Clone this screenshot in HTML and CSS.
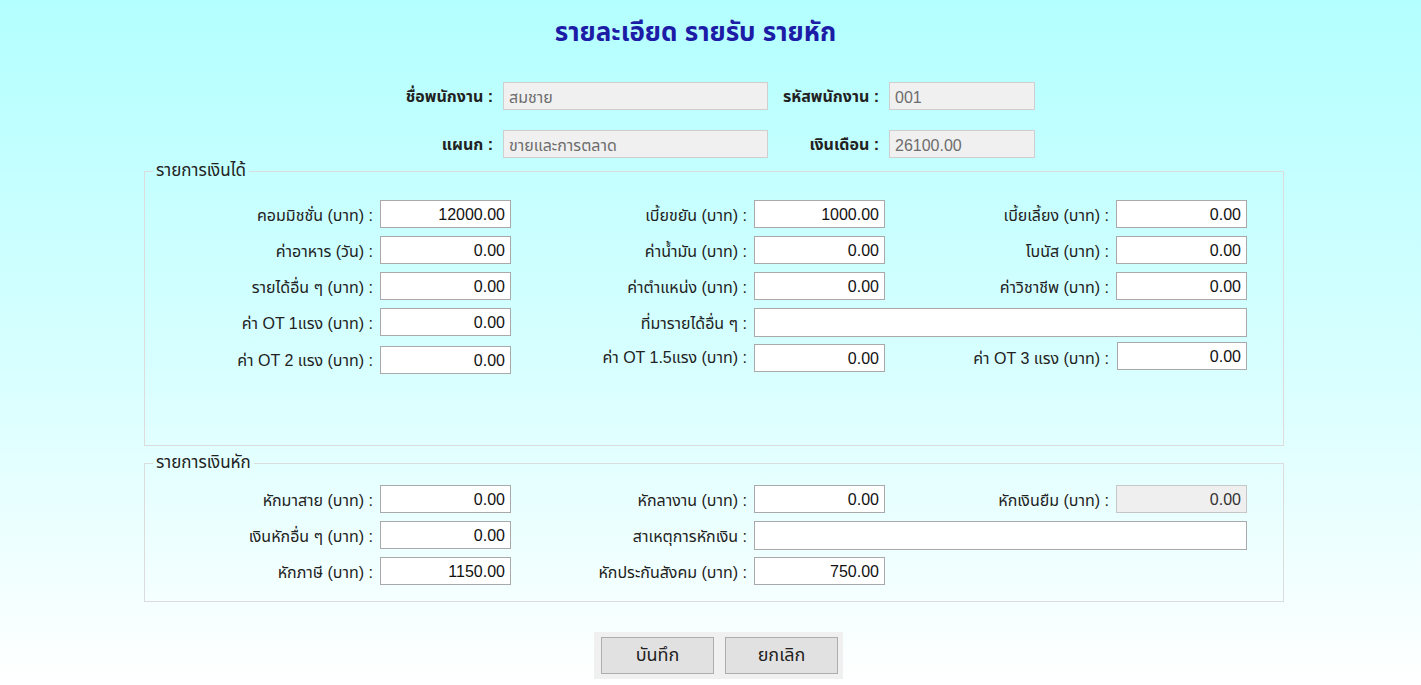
FILE: index.html
```html
<!DOCTYPE html>
<html lang="th">
<head>
    <meta charset="UTF-8">
    <meta name="viewport" content="width=device-width, initial-scale=1.0">
    <title>รายละเอียด รายรับ รายหัก</title>
    <link rel="stylesheet" href="styles.css">
</head>
<body>
    <div class="page">
        <h1 class="title">รายละเอียด รายรับ รายหัก</h1>

        <div class="info">
            <label class="info-label">ชื่อพนักงาน :</label>
            <input type="text" class="info-input" value="สมชาย" disabled>
            <label class="info-label">รหัสพนักงาน :</label>
            <input type="text" class="info-input" value="001" disabled>

            <label class="info-label">แผนก :</label>
            <input type="text" class="info-input" value="ขายและการตลาด" disabled>
            <label class="info-label">เงินเดือน :</label>
            <input type="text" class="info-input" value="26100.00" disabled>
        </div>

        <fieldset class="group income">
            <legend>รายการเงินได้</legend>
            <div class="grid">
                <label>คอมมิชชั่น (บาท) :</label>
                <input type="text" class="num" value="12000.00">
                <label>เบี้ยขยัน (บาท) :</label>
                <input type="text" class="num" value="1000.00">
                <label>เบี้ยเลี้ยง (บาท) :</label>
                <input type="text" class="num" value="0.00">

                <label>ค่าอาหาร (วัน) :</label>
                <input type="text" class="num" value="0.00">
                <label>ค่าน้ำมัน (บาท) :</label>
                <input type="text" class="num" value="0.00">
                <label>โบนัส (บาท) :</label>
                <input type="text" class="num" value="0.00">

                <label>รายได้อื่น ๆ (บาท) :</label>
                <input type="text" class="num" value="0.00">
                <label>ค่าตำแหน่ง (บาท) :</label>
                <input type="text" class="num" value="0.00">
                <label>ค่าวิชาชีพ (บาท) :</label>
                <input type="text" class="num" value="0.00">

                <label>ค่า OT 1แรง (บาท) :</label>
                <input type="text" class="num" value="0.00">
                <label>ที่มารายได้อื่น ๆ :</label>
                <input type="text" class="wide" value="">

                <label class="row5">ค่า OT 2 แรง (บาท) :</label>
                <input type="text" class="num row5" value="0.00">
                <label class="row5 up2">ค่า OT 1.5แรง (บาท) :</label>
                <input type="text" class="num row5 up2" value="0.00">
                <label class="row5 up4">ค่า OT 3 แรง (บาท) :</label>
                <input type="text" class="num row5 up4 nudge" value="0.00">
            </div>
        </fieldset>

        <fieldset class="group deduct">
            <legend>รายการเงินหัก</legend>
            <div class="grid">
                <label>หักมาสาย (บาท) :</label>
                <input type="text" class="num" value="0.00">
                <label>หักลางาน (บาท) :</label>
                <input type="text" class="num" value="0.00">
                <label>หักเงินยืม (บาท) :</label>
                <input type="text" class="num" value="0.00" disabled>

                <label>เงินหักอื่น ๆ (บาท) :</label>
                <input type="text" class="num" value="0.00">
                <label>สาเหตุการหักเงิน :</label>
                <input type="text" class="wide" value="">

                <label>หักภาษี (บาท) :</label>
                <input type="text" class="num" value="1150.00">
                <label>หักประกันสังคม (บาท) :</label>
                <input type="text" class="num" value="750.00">
            </div>
        </fieldset>

        <div class="actions">
            <div class="button-bar">
                <button class="btn">บันทึก</button>
                <button class="btn">ยกเลิก</button>
            </div>
        </div>
    </div>
</body>
</html>
```

FILE: styles.css
```css
body {
    margin: 0;
    height: 685px;
    font-family: "Liberation Sans", "Noto Sans Thai", Loma, "DejaVu Sans", sans-serif;
    font-size: 16px;
    color: #222;
    background: linear-gradient(to bottom, #b3ffff 0%, #d9ffff 55%, #ffffff 100%);
}

.page {
    padding-top: 16px;
}

.title {
    margin: 0;
    padding-right: 30px;
    text-align: center;
    font-size: 26px;
    line-height: 32px;
    font-weight: bold;
    color: #1c1ca6;
}

/* employee header */
.info {
    display: grid;
    grid-template-columns: 160px 265px 121px 146px;
    grid-auto-rows: 28px;
    row-gap: 20px;
    margin: 34px 0 0 343px;
}

.info-label {
    align-self: center;
    text-align: right;
    padding-right: 10px;
    padding-top: 2px;
    font-weight: bold;
    white-space: nowrap;
    color: #222;
}

.info-input {
    box-sizing: border-box;
    height: 28px;
    padding: 3px 5px 0;
    border: 1px solid #cfcfcf;
    background-color: #f0f0f0;
    color: #6d6d6d;
    font-family: inherit;
    font-size: 16px;
}

/* fieldsets */
.group {
    margin: 0 137px 0 144px;
    padding: 0;
    border: 1px solid #dcdcdc;
    box-sizing: border-box;
}

.group legend {
    margin-left: 8px;
    padding: 0 3px;
    line-height: 18px;
    font-size: 17px;
    color: #222;
}

.income {
    margin-top: 4px;
    height: 284px;
}

.deduct {
    margin-top: 8px;
    height: 148px;
}

.grid {
    display: grid;
    grid-template-columns: 235px 131px 243px 131px 231px 131px;
    grid-auto-rows: 28px;
    row-gap: 8px;
    padding-top: 20px;
}

.deduct .grid {
    padding-top: 13px;
}

.grid label {
    align-self: center;
    text-align: right;
    padding-right: 7px;
    padding-top: 4px;
    white-space: nowrap;
}

.grid input {
    box-sizing: border-box;
    height: 28px;
    padding: 2px 5px 0;
    border: 1px solid #a9a9a9;
    background-color: #fff;
    color: #111;
    font-family: inherit;
    font-size: 16px;
}

.grid input.num {
    text-align: right;
}

.grid input:disabled {
    background-color: #efefef;
    color: #333;
    border-color: #c6c6c6;
}

.grid input.wide {
    grid-column: 4 / 7;
    height: 29px;
}

.row5 {
    margin-top: 2px;
}

.grid .up2 {
    margin-top: 0;
}

.grid .up4 {
    margin-top: -2px;
}

.grid label.up2 {
    margin-top: -4px;
}

.nudge {
    margin-left: 1px;
}

/* buttons */
.actions {
    display: flex;
    justify-content: center;
    padding-left: 16px;
    margin-top: 30px;
}

.button-bar {
    display: flex;
    gap: 11px;
    padding: 5px 5px 5px 7px;
    background-color: #f0f0f0;
}

.btn {
    width: 113px;
    height: 37px;
    border: 1px solid #adadad;
    background-color: #e1e1e1;
    color: #222;
    font-family: inherit;
    font-size: 18px;
}
```
